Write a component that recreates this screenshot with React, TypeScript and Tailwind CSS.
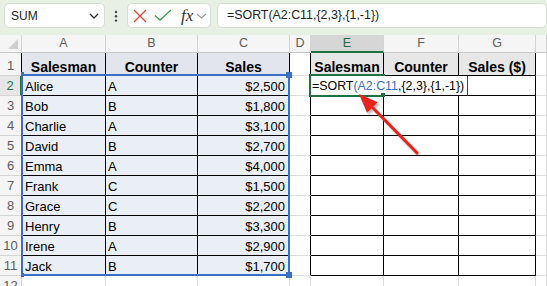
import React from "react";

const data: [string, string, string][] = [
  ["Alice", "A", "$2,500"],
  ["Bob", "B", "$1,800"],
  ["Charlie", "A", "$3,100"],
  ["David", "B", "$2,700"],
  ["Emma", "A", "$4,000"],
  ["Frank", "C", "$1,500"],
  ["Grace", "C", "$2,200"],
  ["Henry", "B", "$3,300"],
  ["Irene", "A", "$2,900"],
  ["Jack", "B", "$1,700"],
];

const colNames = ["", "A", "B", "C", "D", "E", "F", "G", ""];

function inTable(r: number, c: number) {
  return r >= 1 && r <= 11 && ((c >= 1 && c <= 3) || (c >= 5 && c <= 7));
}

function cellText(r: number, c: number): string {
  if (r === 1) {
    if (c === 1 || c === 5) return "Salesman";
    if (c === 2 || c === 6) return "Counter";
    if (c === 3) return "Sales";
    if (c === 7) return "Sales ($)";
    return "";
  }
  if (r >= 2 && r <= 11 && c >= 1 && c <= 3) return data[r - 2][c - 1];
  return "";
}

function Cell({ r, c }: { r: number; c: number }) {
  const rightBlack = inTable(r, c) || inTable(r, c + 1);
  const bottomBlack = inTable(r, c) || inTable(r + 1, c);
  const rb = rightBlack ? "border-r-black" : "border-r-[#dedede]";
  const bb = bottomBlack ? "border-b-black" : "border-b-[#dedede]";
  let bg = "bg-white";
  if (r === 1 && c >= 1 && c <= 3) bg = "bg-[#e2e5eb]";
  else if (r === 1 && c >= 5 && c <= 7) bg = "bg-[#e7e7e7]";
  else if (r >= 2 && r <= 11 && c >= 1 && c <= 3) bg = "bg-[#e9eef7]";
  const text = cellText(r, c);
  let align = "justify-start pl-[3px] items-center pt-[1px] font-normal text-[13px]";
  if (r === 1) align = "justify-center items-end font-bold text-[14px]";
  else if (c === 3) align = "justify-end pr-[4px] items-center pt-[1px] font-normal text-[13px]";
  else if (c === 2) align = "justify-start pl-[2px] items-center pt-[1px] font-normal text-[13px]";
  return (
    <div className={`flex overflow-hidden whitespace-nowrap border-r border-b text-black leading-[15px] ${rb} ${bb} ${bg} ${align}`}>
      {text}
    </div>
  );
}

function ColHeader({ c }: { c: number }) {
  if (c === 0) {
    return (
      <div className="relative border-r border-b border-r-[#d4d4d4] border-b-[#c8c8c8] bg-[#f5f5f5]">
        <svg className="absolute left-0 top-0" width="22" height="18">
          <polygon points="18,4 18,14 8,14" fill="#cfcfcf" />
        </svg>
      </div>
    );
  }
  if (c === 5) {
    return (
      <div className="flex items-center justify-center border-r border-b-2 border-r-[#d4d4d4] border-b-[#1e7145] bg-[#d6d6d6] pt-[1px] text-[12.5px] text-[#1e6b41]">
        {colNames[c]}
      </div>
    );
  }
  return (
    <div className="flex items-center justify-center border-r border-b border-r-[#d4d4d4] border-b-[#c8c8c8] bg-[#f5f5f5] text-[12.5px] text-[#5e5e5e]">
      {colNames[c]}
    </div>
  );
}

function RowHeader({ r }: { r: number }) {
  if (r === 2) {
    return (
      <div className="flex items-center justify-center border-r-2 border-b border-r-[#1e7145] border-b-[#d4d4d4] bg-[#e6e6e6] pt-[1px] text-[13px] text-[#1e7145]">
        {r}
      </div>
    );
  }
  const rb = inTable(r, 1) ? "border-r-black" : "border-r-[#d4d4d4]";
  return (
    <div className={`flex items-center justify-center border-r border-b border-b-[#d4d4d4] bg-[#f5f5f5] pt-[1px] text-[13px] text-[#5e5e5e] ${rb} ${r === 1 ? "items-end" : ""}`}>
      {r}
    </div>
  );
}

export default function App() {
  const rows = Array.from({ length: 13 }, (_, i) => i);
  const cols = Array.from({ length: 9 }, (_, i) => i);
  return (
    <div
      className="relative h-[286px] w-[547px] overflow-hidden bg-white"
      style={{ fontFamily: '"Liberation Sans", Arial, sans-serif' }}
    >
      {/* Toolbar */}
      <div className="flex h-[35px] items-start bg-[#e8efe3] pl-[4px] pt-[3px]">
        <div className="flex h-[25px] w-[101px] items-center justify-between rounded-[5px] border border-[#d8dcd6] bg-white pl-[6px] pr-[5px]">
          <span className="text-[12px] text-[#222]">SUM</span>
          <svg width="10" height="8" viewBox="0 0 10 8">
            <polyline points="1,2 5,6 9,2" fill="none" stroke="#333" strokeWidth="1.3" />
          </svg>
        </div>
        <div className="flex h-[25px] w-[22px] items-center justify-center">
          <svg width="4" height="14" viewBox="0 0 4 14">
            <circle cx="2" cy="3" r="1.2" fill="#444" />
            <circle cx="2" cy="7.3" r="1.2" fill="#444" />
            <circle cx="2" cy="11.6" r="1.2" fill="#444" />
          </svg>
        </div>
        <div className="flex h-[25px] w-[84px] items-center rounded-[5px] border border-[#d8dcd6] bg-white pl-[4px]">
          <svg width="16" height="16" viewBox="0 0 16 16">
            <path d="M2 2 L14 14 M14 2 L2 14" stroke="#e0413a" strokeWidth="1.2" fill="none" />
          </svg>
          <svg className="ml-[6px]" width="18" height="14" viewBox="0 0 18 14">
            <polyline points="1,6.5 6,11 17,1" stroke="#3f9b50" strokeWidth="1.3" fill="none" />
          </svg>
          <span
            className="ml-[9px] text-[17px] italic leading-none text-[#333]"
            style={{ fontFamily: '"Liberation Serif", "Times New Roman", serif' }}
          >
            fx
          </span>
          <svg className="ml-[3px]" width="11" height="8" viewBox="0 0 11 8">
            <polyline points="1,2 5.5,6 10,2" fill="none" stroke="#9a9a9a" strokeWidth="1.1" />
          </svg>
        </div>
        <div className="ml-[6px] flex h-[25px] w-[330px] items-center rounded-[5px] border border-[#d8dcd6] bg-white pl-[9px]">
          <span className="whitespace-nowrap text-[12.4px] text-[#222]">=SORT(A2:C11,{"{"}2,3{"}"},{"{"}1,-1{"}"})</span>
        </div>
      </div>

      {/* Grid */}
      <div className="grid grid-cols-[22px_84px_92px_92px_21px_73px_75px_77px_1fr] grid-rows-[18px_23px_repeat(11,20px)]">
        {rows.map((r) =>
          cols.map((c) => {
            if (r === 0) return <ColHeader key={`${r}-${c}`} c={c} />;
            if (c === 0) return <RowHeader key={`${r}-${c}`} r={r} />;
            return <Cell key={`${r}-${c}`} r={r} c={c} />;
          })
        )}
      </div>

      {/* Referenced range highlight A2:C11 */}
      <div className="pointer-events-none absolute left-[21px] top-[74px] h-[202px] w-[269px] border-2 border-[#3a6fc8]" />
      <div className="pointer-events-none absolute left-[286px] top-[72px] h-[6px] w-[6px] bg-[#3a6fc8]" />
      <div className="pointer-events-none absolute left-[286px] top-[272px] h-[6px] w-[6px] bg-[#3a6fc8]" />
      <div className="pointer-events-none absolute left-[21px] top-[72px] h-[4px] w-[3px] bg-[#3a6fc8]" />
      <div className="pointer-events-none absolute left-[21px] top-[273px] h-[4px] w-[3px] bg-[#3a6fc8]" />

      {/* Active cell E2 */}
      <div className="pointer-events-none absolute left-[309px] top-[74px] h-[23px] w-[76px] border-2 border-[#1e7145]" />
      <div className="absolute left-[311px] top-[76px] flex h-[19px] w-[157px] items-center whitespace-nowrap border-r border-r-[#444] bg-white pl-[1px] pt-[1px] text-[12.4px] leading-[15px] text-black">
        <span className="shrink-0">=SORT</span>
        <span className="shrink-0 text-[#3a6fc8]">(A2:C11</span>
        <span className="shrink-0">,{"{"}2,3{"}"},{"{"}1,-1{"}"})</span>
      </div>
      <div className="pointer-events-none absolute left-[381px] top-[93px] h-[4px] w-[4px] bg-[#1e7145]" />

      {/* Red arrow */}
      <svg className="pointer-events-none absolute left-0 top-0" width="547" height="286">
        <defs>
          <filter id="arrowShadow" x="-30%" y="-30%" width="160%" height="160%">
            <feGaussianBlur stdDeviation="1.3" />
          </filter>
        </defs>
        <g transform="translate(2,2)" opacity="0.45" filter="url(#arrowShadow)">
          <line x1="417" y1="153" x2="373" y2="108" stroke="#555" strokeWidth="3" />
          <polygon points="359,94 377.7,102.2 367,112.8" fill="#555" />
        </g>
        <line x1="417" y1="153" x2="373" y2="108" stroke="#e8231b" strokeWidth="3" strokeLinecap="round" />
        <polygon points="359,94 377.7,102.2 367,112.8" fill="#e8231b" />
      </svg>
    </div>
  );
}
